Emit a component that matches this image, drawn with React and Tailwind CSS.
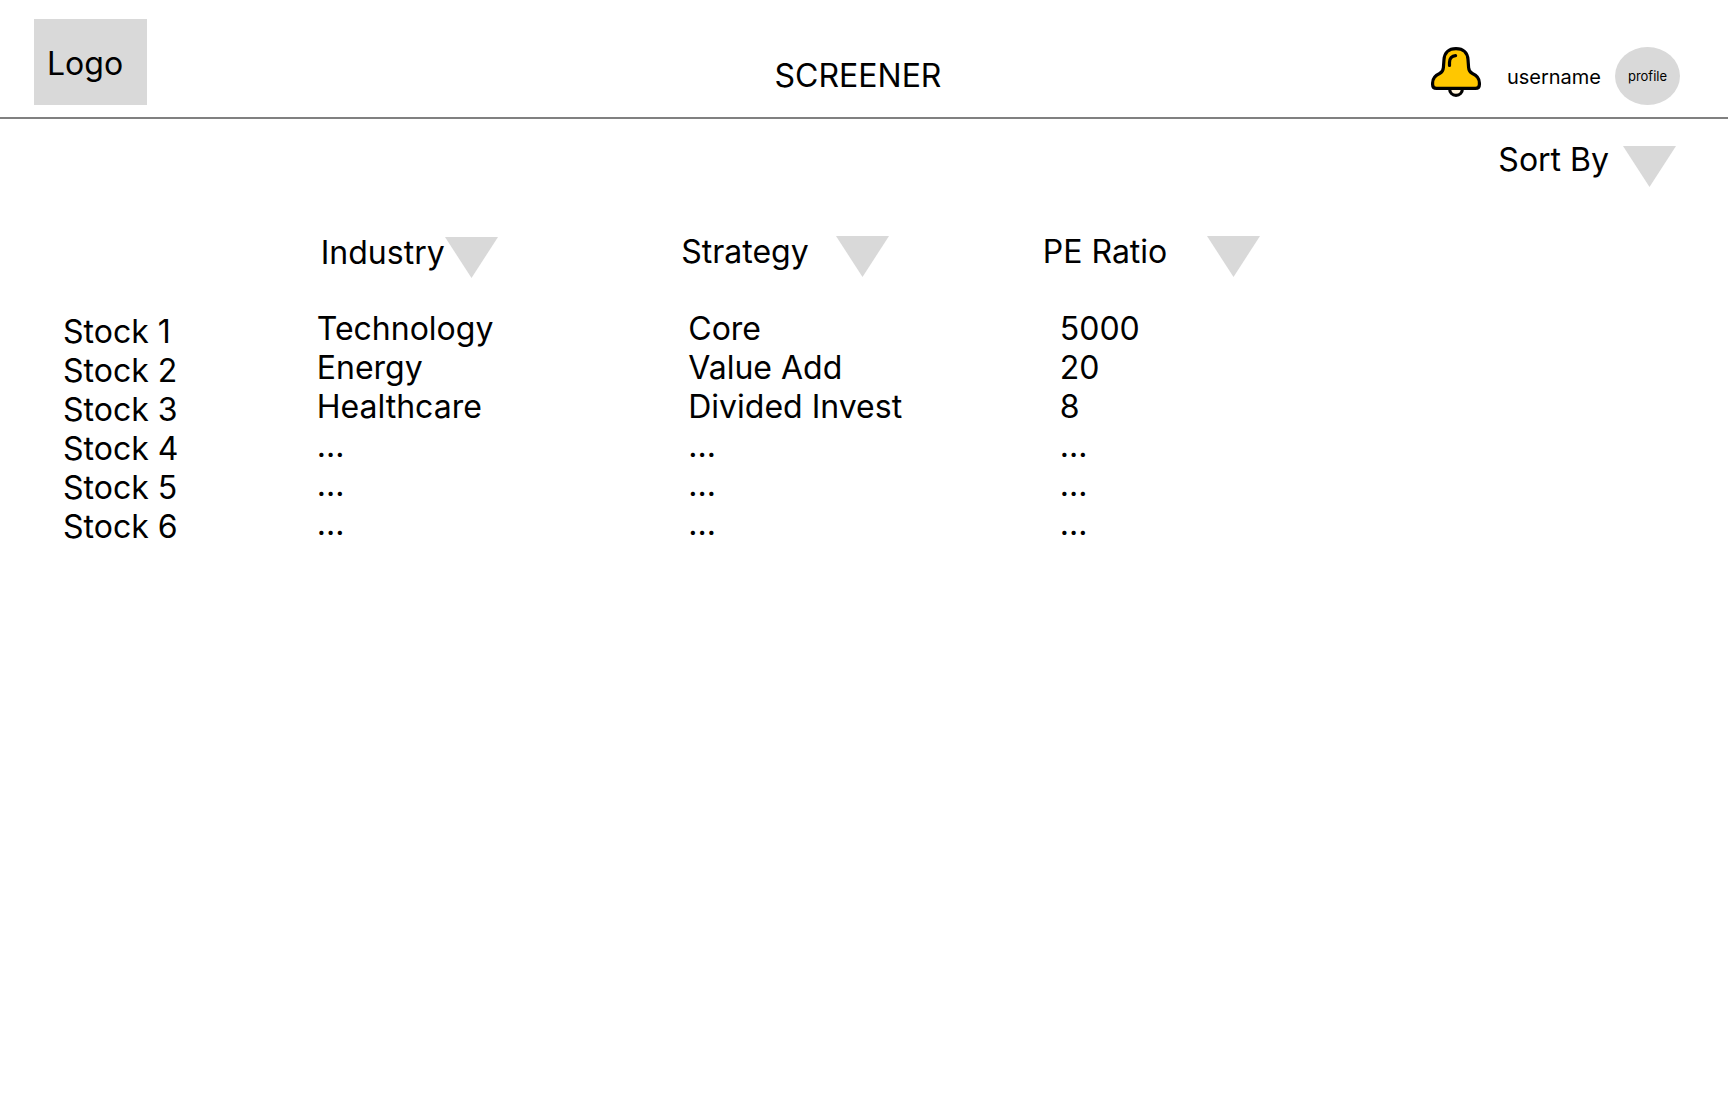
const columns = [
  { label: "Industry", cell: "pl-[27px] pt-px", button: "w-[177px]" },
  { label: "Strategy", cell: "pl-4", button: "w-[208px]" },
  { label: "PE Ratio", cell: "pl-[6px]", button: "w-[217px]" },
];

const stocks = [
  { name: "Stock 1", values: ["Technology", "Core", "5000"] },
  { name: "Stock 2", values: ["Energy", "Value Add", "20"] },
  { name: "Stock 3", values: ["Healthcare", "Divided Invest", "8"] },
  { name: "Stock 4", values: ["...", "...", "..."] },
  { name: "Stock 5", values: ["...", "...", "..."] },
  { name: "Stock 6", values: ["...", "...", "..."] },
];

function Triangle({ className }) {
  return (
    <svg className={`h-[41px] w-[53px] shrink-0 ${className}`} viewBox="0 0 53 41" aria-hidden="true">
      <path d="M0 0H53L26.5 41Z" fill="#D9D9D9" />
    </svg>
  );
}

function Bell() {
  return (
    <svg className="size-[50px]" viewBox="0 0 50 50" fill="none" stroke="#000" strokeWidth="3.2" strokeLinecap="round" strokeLinejoin="round" aria-hidden="true">
      <path d="M18.6 41.5C18.6 45.6 21.4 48.4 25 48.4S31.4 45.6 31.4 41.5Z" fill="#FFF3DA" />
      <path d="M25 1.6C17.5 1.6 13.4 6 13 12.5L12.4 20.5C12.2 23.6 11.3 25.3 8.6 26.5C4 28.5 1.6 31.5 1.6 36V37.5C1.6 40 3 41.4 5.5 41.4H44.5C47 41.4 48.4 40 48.4 37.5V36C48.4 31.5 46 28.5 41.4 26.5C38.7 25.3 37.8 23.6 37.6 20.5L37 12.5C36.6 6 32.5 1.6 25 1.6Z" fill="#FFC700" />
      <path d="M18.5 18.5V15.5C18.5 11.5 20.8 8.8 24.6 8.6" />
    </svg>
  );
}

export default function App() {
  return (
    <div className="min-h-screen bg-white font-['Inter',sans-serif] text-[32px] leading-[39px] font-normal text-black">
      <header className="grid grid-cols-[1fr_auto_1fr] items-start border-b-2 border-[#808080] pt-[19px] pr-12 pb-3 pl-[34px]">
        <a href="#home" className="block h-[86px] w-[113px] bg-[#D9D9D9] pt-[25px] pl-[13px]">Logo</a>
        <h1 className="pt-[37px] pl-[2px]">SCREENER</h1>
        <div className="flex items-start justify-end pt-7">
          <button type="button" aria-label="Notifications" className="mr-[26px]">
            <Bell />
          </button>
          <span className="mr-[14px] pt-[18px] text-[20px] leading-6">username</span>
          <button type="button" className="flex h-[58px] w-[65px] items-center justify-center rounded-[50%] bg-[#D9D9D9] text-[13px] leading-4">
            profile
          </button>
        </div>
      </header>

      <main>
        <div className="flex justify-end pt-[21px] pr-[52px]">
          <button type="button" className="flex items-start gap-[14px]">
            Sort By
            <Triangle className="mt-[6px]" />
          </button>
        </div>

        <table className="mt-[45px] w-full table-fixed text-left">
          <colgroup>
            <col className="w-[17%]" />
            <col className="w-[21.5%]" />
            <col className="w-[21.5%]" />
            <col />
          </colgroup>
          <thead>
            <tr className="h-20 align-top">
              <td />
              {columns.map((c) => (
                <th key={c.label} scope="col" className={`font-normal ${c.cell}`}>
                  <button type="button" className={`flex items-start justify-between whitespace-nowrap ${c.button}`}>
                    {c.label}
                    <Triangle className="mt-1" />
                  </button>
                </th>
              ))}
            </tr>
          </thead>
          <tbody>
            {stocks.map((s) => (
              <tr key={s.name} className="align-top">
                <th scope="row" className="pl-[63px] font-normal">{s.name}</th>
                {s.values.map((v, i) => (
                  <td key={i} className="pb-[6px] pl-[23px] leading-[33px]">{v}</td>
                ))}
              </tr>
            ))}
          </tbody>
        </table>
      </main>
    </div>
  );
}
